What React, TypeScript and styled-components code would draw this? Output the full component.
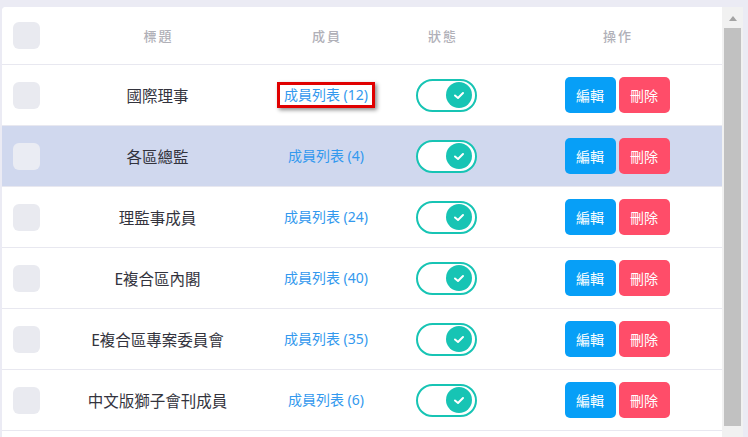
import React from "react";
import styled, { createGlobalStyle } from "styled-components";

const Global = createGlobalStyle`
  html, body { margin: 0; padding: 0; overflow: hidden; }
  body {
    background: #ebebf4;
    font-family: "Noto Sans", "Noto Sans CJK TC", sans-serif;
  }
`;

const Page = styled.div`
  box-sizing: border-box;
  height: 437px;
  padding: 7px 5px 0 2px;
  display: flex;
`;

const Card = styled.div`
  flex: 1;
  min-width: 0;
  background: #ffffff;
  border-top-left-radius: 4px;
  overflow: hidden;
`;

const Rail = styled.div`
  width: 21px;
  flex: none;
  background: #f1f1f1;
  display: flex;
  flex-direction: column;
  align-items: stretch;
`;

const RailButton = styled.div`
  height: 21px;
  display: flex;
  justify-content: center;
  padding-top: 9px;
  box-sizing: border-box;
`;

const Arrow = styled.div`
  width: 0;
  height: 0;
  border-left: 4.5px solid transparent;
  border-right: 4.5px solid transparent;
  border-bottom: 5px solid #a3a3a3;
`;

const Thumb = styled.div`
  height: 398px;
  margin: 0 2px 0 2px;
  background: #c1c1c1;
`;

const Row = styled.div<{ $head?: boolean; $active?: boolean }>`
  display: grid;
  grid-template-columns: 56px 199px 138px 94px 1fr;
  align-items: center;
  height: ${(p) => (p.$head ? 57 : 60)}px;
  border-bottom: 1px solid #e8e8f0;
  background: ${(p) => (p.$active ? "#d0d8ee" : "#ffffff")};
`;

const CheckCell = styled.div`
  padding-left: 11px;
  display: flex;
`;

const Check = styled.div<{ $light?: boolean }>`
  width: 27px;
  height: 27px;
  border-radius: 6px;
  background: ${(p) => (p.$light ? "#eaecf3" : "#e9eaf0")};
`;

const HeadCell = styled.div<{ $pl?: number }>`
  text-align: center;
  font-size: 13px;
  font-weight: 500;
  letter-spacing: 2px;
  padding-left: ${(p) => p.$pl ?? 2}px;
  color: #b0b0b8;
`;

const Title = styled.div`
  text-align: center;
  font-size: 15.5px;
  color: #33333d;
`;

const LinkCell = styled.div`
  display: flex;
  justify-content: center;
`;

const MemberLink = styled.a<{ $focus?: boolean }>`
  display: inline-block;
  font-size: 14px;
  line-height: 20px;
  color: #3399ee;
  text-decoration: none;
  padding: 0 4px;
  border: 3px solid ${(p) => (p.$focus ? "#e00000" : "transparent")};
  box-shadow: ${(p) => (p.$focus ? "2px 2px 4px rgba(0,0,0,0.45)" : "none")};
`;

const ToggleCell = styled.div`
  display: flex;
  justify-content: center;
  padding-left: 9px;
`;

const Toggle = styled.div`
  box-sizing: border-box;
  width: 61px;
  height: 33px;
  border: 2.5px solid #17c4b4;
  border-radius: 17px;
  display: flex;
  align-items: center;
  justify-content: flex-end;
  padding-right: 3px;
  background: #ffffff;
`;

const Knob = styled.div`
  width: 26px;
  height: 26px;
  border-radius: 50%;
  background: #17c4b4;
  display: flex;
  align-items: center;
  justify-content: center;
`;

const Actions = styled.div`
  display: flex;
  justify-content: center;
  gap: 3px;
  padding-left: 23px;
`;

const Btn = styled.button<{ $danger?: boolean }>`
  width: 51px;
  height: 36px;
  border: none;
  border-radius: 5px;
  font-family: "Noto Sans", "Noto Sans CJK TC", sans-serif;
  font-size: 14px;
  color: #ffffff;
  padding: 0;
  background: ${(p) => (p.$danger ? "#ff4d69" : "#079ff7")};
`;

const rows = [
  { title: "國際理事", count: 12 },
  { title: "各區總監", count: 4 },
  { title: "理監事成員", count: 24 },
  { title: "E複合區內閣", count: 40 },
  { title: "E複合區專案委員會", count: 35 },
  { title: "中文版獅子會刊成員", count: 6 },
];

const CheckIcon = () => (
  <svg width="12" height="9" viewBox="0 0 12 9">
    <path d="M2 4.5 L5 7 L10 2" fill="none" stroke="#ffffff" strokeWidth="2" strokeLinecap="round" strokeLinejoin="round" />
  </svg>
);

export default function App() {
  return (
    <>
      <Global />
      <Page>
        <Card>
          <Row $head>
            <CheckCell><Check /></CheckCell>
            <HeadCell>標題</HeadCell>
            <HeadCell>成員</HeadCell>
            <HeadCell>狀態</HeadCell>
            <HeadCell $pl={25}>操作</HeadCell>
          </Row>
          {rows.map((r, i) => (
            <Row key={i} $active={i === 1}>
              <CheckCell><Check $light={i === 1} /></CheckCell>
              <Title>{r.title}</Title>
              <LinkCell>
                <MemberLink href="#" $focus={i === 0}>成員列表 ({r.count})</MemberLink>
              </LinkCell>
              <ToggleCell>
                <Toggle>
                  <Knob><CheckIcon /></Knob>
                </Toggle>
              </ToggleCell>
              <Actions>
                <Btn>編輯</Btn>
                <Btn $danger>刪除</Btn>
              </Actions>
            </Row>
          ))}
        </Card>
        <Rail>
          <RailButton><Arrow /></RailButton>
          <Thumb />
        </Rail>
      </Page>
    </>
  );
}
